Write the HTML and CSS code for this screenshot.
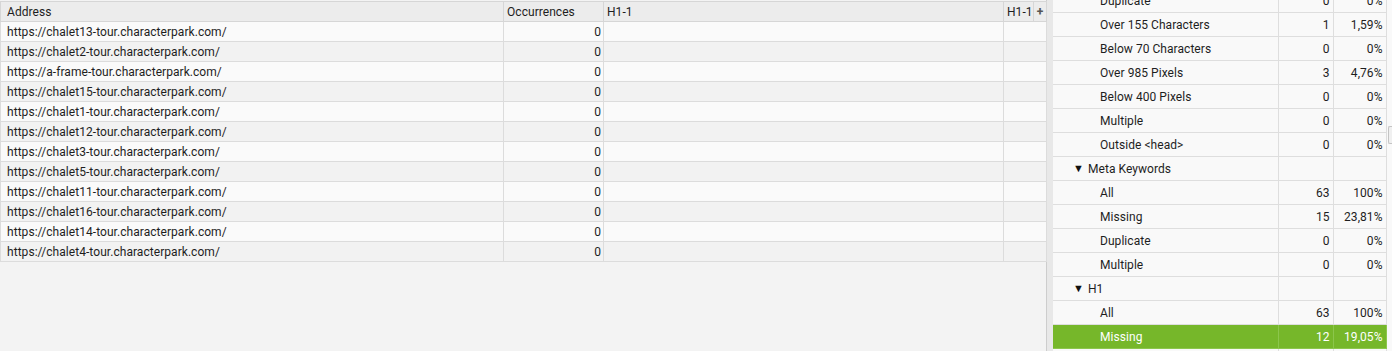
FILE: index.html
```html
<!DOCTYPE html>
<html lang="en">

<head>
	<meta charset="UTF-8">
	<title>H1</title>
	<link rel="stylesheet" href="styles.css">
</head>

<body>
	<div class="grid-pane">
		<table class="grid">
			<colgroup>
				<col class="c-addr">
				<col class="c-occ">
				<col class="c-h1">
				<col class="c-h1b">
				<col class="c-plus">
			</colgroup>
			<thead>
				<tr>
					<th>Address</th>
					<th>Occurrences</th>
					<th>H1-1</th>
					<th>H1-1</th>
					<th class="plus">+</th>
				</tr>
			</thead>
			<tbody>
				<tr><td>https://chalet13-tour.characterpark.com/</td><td class="num">0</td><td></td><td colspan="2"></td></tr>
				<tr><td>https://chalet2-tour.characterpark.com/</td><td class="num">0</td><td></td><td colspan="2"></td></tr>
				<tr><td>https://a-frame-tour.characterpark.com/</td><td class="num">0</td><td></td><td colspan="2"></td></tr>
				<tr><td>https://chalet15-tour.characterpark.com/</td><td class="num">0</td><td></td><td colspan="2"></td></tr>
				<tr><td>https://chalet1-tour.characterpark.com/</td><td class="num">0</td><td></td><td colspan="2"></td></tr>
				<tr><td>https://chalet12-tour.characterpark.com/</td><td class="num">0</td><td></td><td colspan="2"></td></tr>
				<tr><td>https://chalet3-tour.characterpark.com/</td><td class="num">0</td><td></td><td colspan="2"></td></tr>
				<tr><td>https://chalet5-tour.characterpark.com/</td><td class="num">0</td><td></td><td colspan="2"></td></tr>
				<tr><td>https://chalet11-tour.characterpark.com/</td><td class="num">0</td><td></td><td colspan="2"></td></tr>
				<tr><td>https://chalet16-tour.characterpark.com/</td><td class="num">0</td><td></td><td colspan="2"></td></tr>
				<tr><td>https://chalet14-tour.characterpark.com/</td><td class="num">0</td><td></td><td colspan="2"></td></tr>
				<tr><td>https://chalet4-tour.characterpark.com/</td><td class="num">0</td><td></td><td colspan="2"></td></tr>
			</tbody>
		</table>
	</div>

	<div class="splitter"></div>

	<div class="tree-pane">
		<table class="tree">
			<colgroup>
				<col class="c-label">
				<col class="c-count">
				<col class="c-pct">
			</colgroup>
			<tbody>
				<tr><td class="leaf">Duplicate</td><td class="num">0</td><td class="num">0%</td></tr>
				<tr><td class="leaf">Over 155 Characters</td><td class="num">1</td><td class="num">1,59%</td></tr>
				<tr><td class="leaf">Below 70 Characters</td><td class="num">0</td><td class="num">0%</td></tr>
				<tr><td class="leaf">Over 985 Pixels</td><td class="num">3</td><td class="num">4,76%</td></tr>
				<tr><td class="leaf">Below 400 Pixels</td><td class="num">0</td><td class="num">0%</td></tr>
				<tr><td class="leaf">Multiple</td><td class="num">0</td><td class="num">0%</td></tr>
				<tr><td class="leaf">Outside &lt;head&gt;</td><td class="num">0</td><td class="num">0%</td></tr>
				<tr><td class="group"><span class="arrow">▼</span>Meta Keywords</td><td></td><td></td></tr>
				<tr><td class="leaf">All</td><td class="num">63</td><td class="num">100%</td></tr>
				<tr><td class="leaf">Missing</td><td class="num">15</td><td class="num">23,81%</td></tr>
				<tr><td class="leaf">Duplicate</td><td class="num">0</td><td class="num">0%</td></tr>
				<tr><td class="leaf">Multiple</td><td class="num">0</td><td class="num">0%</td></tr>
				<tr><td class="group"><span class="arrow">▼</span>H1</td><td></td><td></td></tr>
				<tr><td class="leaf">All</td><td class="num">63</td><td class="num">100%</td></tr>
				<tr class="selected"><td class="leaf">Missing</td><td class="num">12</td><td class="num">19,05%</td></tr>
				<tr><td class="leaf">Duplicate</td><td class="num">0</td><td class="num">0%</td></tr>
			</tbody>
		</table>
		<div class="scroll-thumb"></div>
	</div>
</body>

</html>
```

FILE: styles.css
```css
body {
	margin: 0;
	height: 351px;
	overflow: hidden;
	display: flex;
	background: #f3f3f3;
	font: 12px/1 'Roboto', 'Liberation Sans', sans-serif;
	letter-spacing: 0.05px;
	color: #1e1e1e;
}

table {
	border-collapse: collapse;
	table-layout: fixed;
}

td,
th {
	padding: 0 6px;
	white-space: nowrap;
	overflow: hidden;
}

.num {
	text-align: right;
}

/* left grid */

.grid-pane {
	width: 1046px;
	flex: none;
	padding-top: 1px;
	border-right: 1px solid #cdcdcd;
	background: #f3f3f3;
}

.grid {
	width: 1046px;
}

.c-addr {
	width: 503px;
}

.c-occ {
	width: 100px;
}

.c-h1 {
	width: 400px;
}

.c-h1b {
	width: 30px;
}

.c-plus {
	width: 13px;
}

.grid th {
	height: 19px;
	padding: 0 3px;
	font-weight: normal;
	text-align: left;
	background: #ececec;
	border: 1px solid #d6d6d6;
}

.grid th:first-child {
	padding-left: 6px;
}

.grid th.plus {
	padding: 0;
	text-align: center;
	font-weight: bold;
	color: #555;
}

.grid td {
	height: 19px;
	padding: 0 3px 0 6px;
	border: 1px solid #dcdcdc;
	background: #fafafa;
}

.grid td.num {
	padding-right: 2px;
}

.grid tbody tr:nth-child(even) td {
	background: #f2f2f2;
}

/* splitter */

.splitter {
	width: 6px;
	flex: none;
	background: #e8e8e8;
}

/* right tree */

.tree-pane {
	position: relative;
	flex: 1;
	overflow: hidden;
	background: #f9f9f9;
}

.tree {
	width: 333px;
	margin-top: -11px;
}

.c-label {
	width: 225px;
}

.c-count {
	width: 55px;
}

.c-pct {
	width: 53px;
}

.tree td {
	height: 23px;
	border-bottom: 1px solid #dedede;
	border-right: 1px solid #dedede;
	background: #f9f9f9;
}

.tree td.num {
	padding-right: 3px;
}

.tree td.leaf {
	padding-left: 47px;
}

.tree td.group {
	padding-left: 20px;
}

.arrow {
	display: inline-block;
	width: 15px;
	font-size: 11px;
	color: #111;
	vertical-align: 1px;
}

.tree tr.selected td {
	background: #76b72a;
	color: #fff;
	border-bottom-color: #8cc64c;
	border-right-color: #8cc64c;
}

.scroll-thumb {
	position: absolute;
	top: 126px;
	right: 0;
	width: 3px;
	height: 16px;
	border: 1px solid #c4c4c4;
	border-right: none;
	border-radius: 2px 0 0 2px;
	background: #f0f0f0;
}
```
